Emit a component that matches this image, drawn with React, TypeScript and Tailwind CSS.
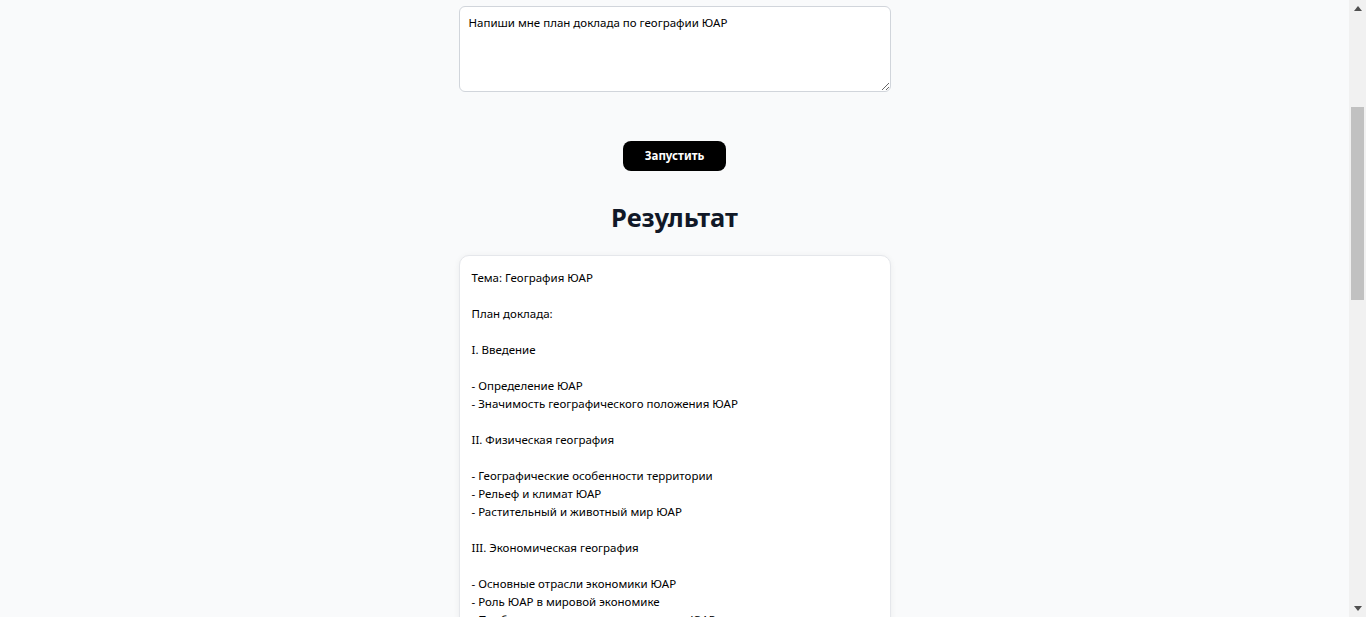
import React from "react";

const resultText = `Тема: География ЮАР

План доклада:

I. Введение

- Определение ЮАР
- Значимость географического положения ЮАР

II. Физическая география

- Географические особенности территории
- Рельеф и климат ЮАР
- Растительный и животный мир ЮАР

III. Экономическая география

- Основные отрасли экономики ЮАР
- Роль ЮАР в мировой экономике
- Проблемы экономического развития ЮАР

IV. Социальная география

- Население ЮАР
- Культура и традиции`;

export default function App() {
  return (
    <div
      className="flex h-[617px] w-full overflow-hidden bg-[#f9fafb]"
      style={{ fontFamily: '"Noto Sans", "Open Sans", sans-serif' }}
    >
      <main className="flex-1 overflow-hidden">
        <div className="mx-auto flex w-[432px] flex-col items-center pt-[6px]">
          <textarea
            className="h-[86px] w-full resize-y rounded-[6px] border border-[#d1d5db] bg-white px-[9px] py-[7px] text-[11.5px] leading-[18px] text-black outline-none"
            defaultValue="Напиши мне план доклада по географии ЮАР"
          />
          <button className="mt-[49px] h-[30px] w-[103px] rounded-[8px] bg-black text-[11.5px] font-bold text-white">
            Запустить
          </button>
          <h2 className="mt-[28px] text-[25.5px] font-bold leading-[36px] text-[#111827]">
            Результат
          </h2>
          <div className="mt-[20px] w-full rounded-[10px] border border-[#e5e7eb] bg-white px-[12px] pb-[12px] pt-[13px] shadow-[0_1px_6px_rgba(0,0,0,0.06)]">
            <div className="whitespace-pre-wrap text-[11.5px] leading-[18px] text-black">
              {resultText}
            </div>
          </div>
        </div>
      </main>
      <aside className="flex h-full w-[17px] flex-col bg-[#f1f1f1]">
        <div className="flex h-[17px] items-center justify-center">
          <svg width="8" height="5" viewBox="0 0 8 5">
            <path d="M0 5 L4 0 L8 5 Z" fill="#505050" />
          </svg>
        </div>
        <div className="flex-1 px-[2px]">
          <div className="mt-[90px] h-[193px] w-full bg-[#c1c1c1]" />
        </div>
        <div className="flex h-[17px] items-center justify-center">
          <svg width="8" height="5" viewBox="0 0 8 5">
            <path d="M0 0 L8 0 L4 5 Z" fill="#505050" />
          </svg>
        </div>
      </aside>
    </div>
  );
}
